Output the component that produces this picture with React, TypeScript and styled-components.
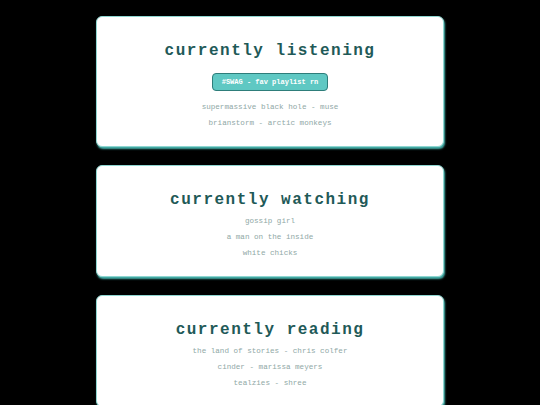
import React from "react";
import styled, { createGlobalStyle } from "styled-components";

const mono = `"Courier New", Courier, "Nimbus Mono PS", "Nimbus Mono L", FreeMono, "Liberation Mono", monospace`;

const Global = createGlobalStyle`
  html, body { margin: 0; padding: 0; background: #000; }
  body { font-family: ${mono}; }
`;

const Page = styled.main`
  display: flex;
  flex-direction: column;
  align-items: center;
  gap: 18px;
  padding: 16px 0 16px;
`;

const Card = styled.section`
  box-sizing: border-box;
  width: 348px;
  background: #fff;
  border: 1px solid #8fd6d1;
  border-radius: 6px;
  box-shadow: 1px 2px 2px #47b3ad;
  padding: 25px 20px 15px;
  display: flex;
  flex-direction: column;
  align-items: center;
`;

const Title = styled.h2`
  margin: 0 0 4px;
  font-family: ${mono};
  font-size: 16px;
  line-height: 18px;
  font-weight: 700;
  letter-spacing: 1.5px;
  color: #1f5a58;
  text-align: center;
`;

const Pill = styled.button`
  box-sizing: border-box;
  margin: 9px 0 8px;
  height: 18px;
  padding: 0 9px;
  background: #5fc8c3;
  border: 1px solid #2e7d7a;
  border-radius: 4px;
  color: #fff;
  font-family: ${mono};
  font-weight: 700;
  font-size: 7px;
  line-height: 16px;
`;

const List = styled.ul`
  list-style: none;
  margin: 0;
  padding: 0;
`;

const Item = styled.li`
  font-family: ${mono};
  font-size: 7.6px;
  line-height: 16px;
  color: #8fa8a6;
  text-align: center;
`;

type Section = { title: string; pill?: string; items: string[] };

const sections: Section[] = [
  {
    title: "currently listening",
    pill: "#SWAG - fav playlist rn",
    items: ["supermassive black hole - muse", "brianstorm - arctic monkeys"],
  },
  {
    title: "currently watching",
    items: ["gossip girl", "a man on the inside", "white chicks"],
  },
  {
    title: "currently reading",
    items: [
      "the land of stories - chris colfer",
      "cinder - marissa meyers",
      "tealzies - shree",
    ],
  },
];

export default function App() {
  return (
    <>
      <Global />
      <Page>
        {sections.map((s) => (
          <Card key={s.title}>
            <Title>{s.title}</Title>
            {s.pill && <Pill>{s.pill}</Pill>}
            <List>
              {s.items.map((i) => (
                <Item key={i}>{i}</Item>
              ))}
            </List>
          </Card>
        ))}
      </Page>
    </>
  );
}
